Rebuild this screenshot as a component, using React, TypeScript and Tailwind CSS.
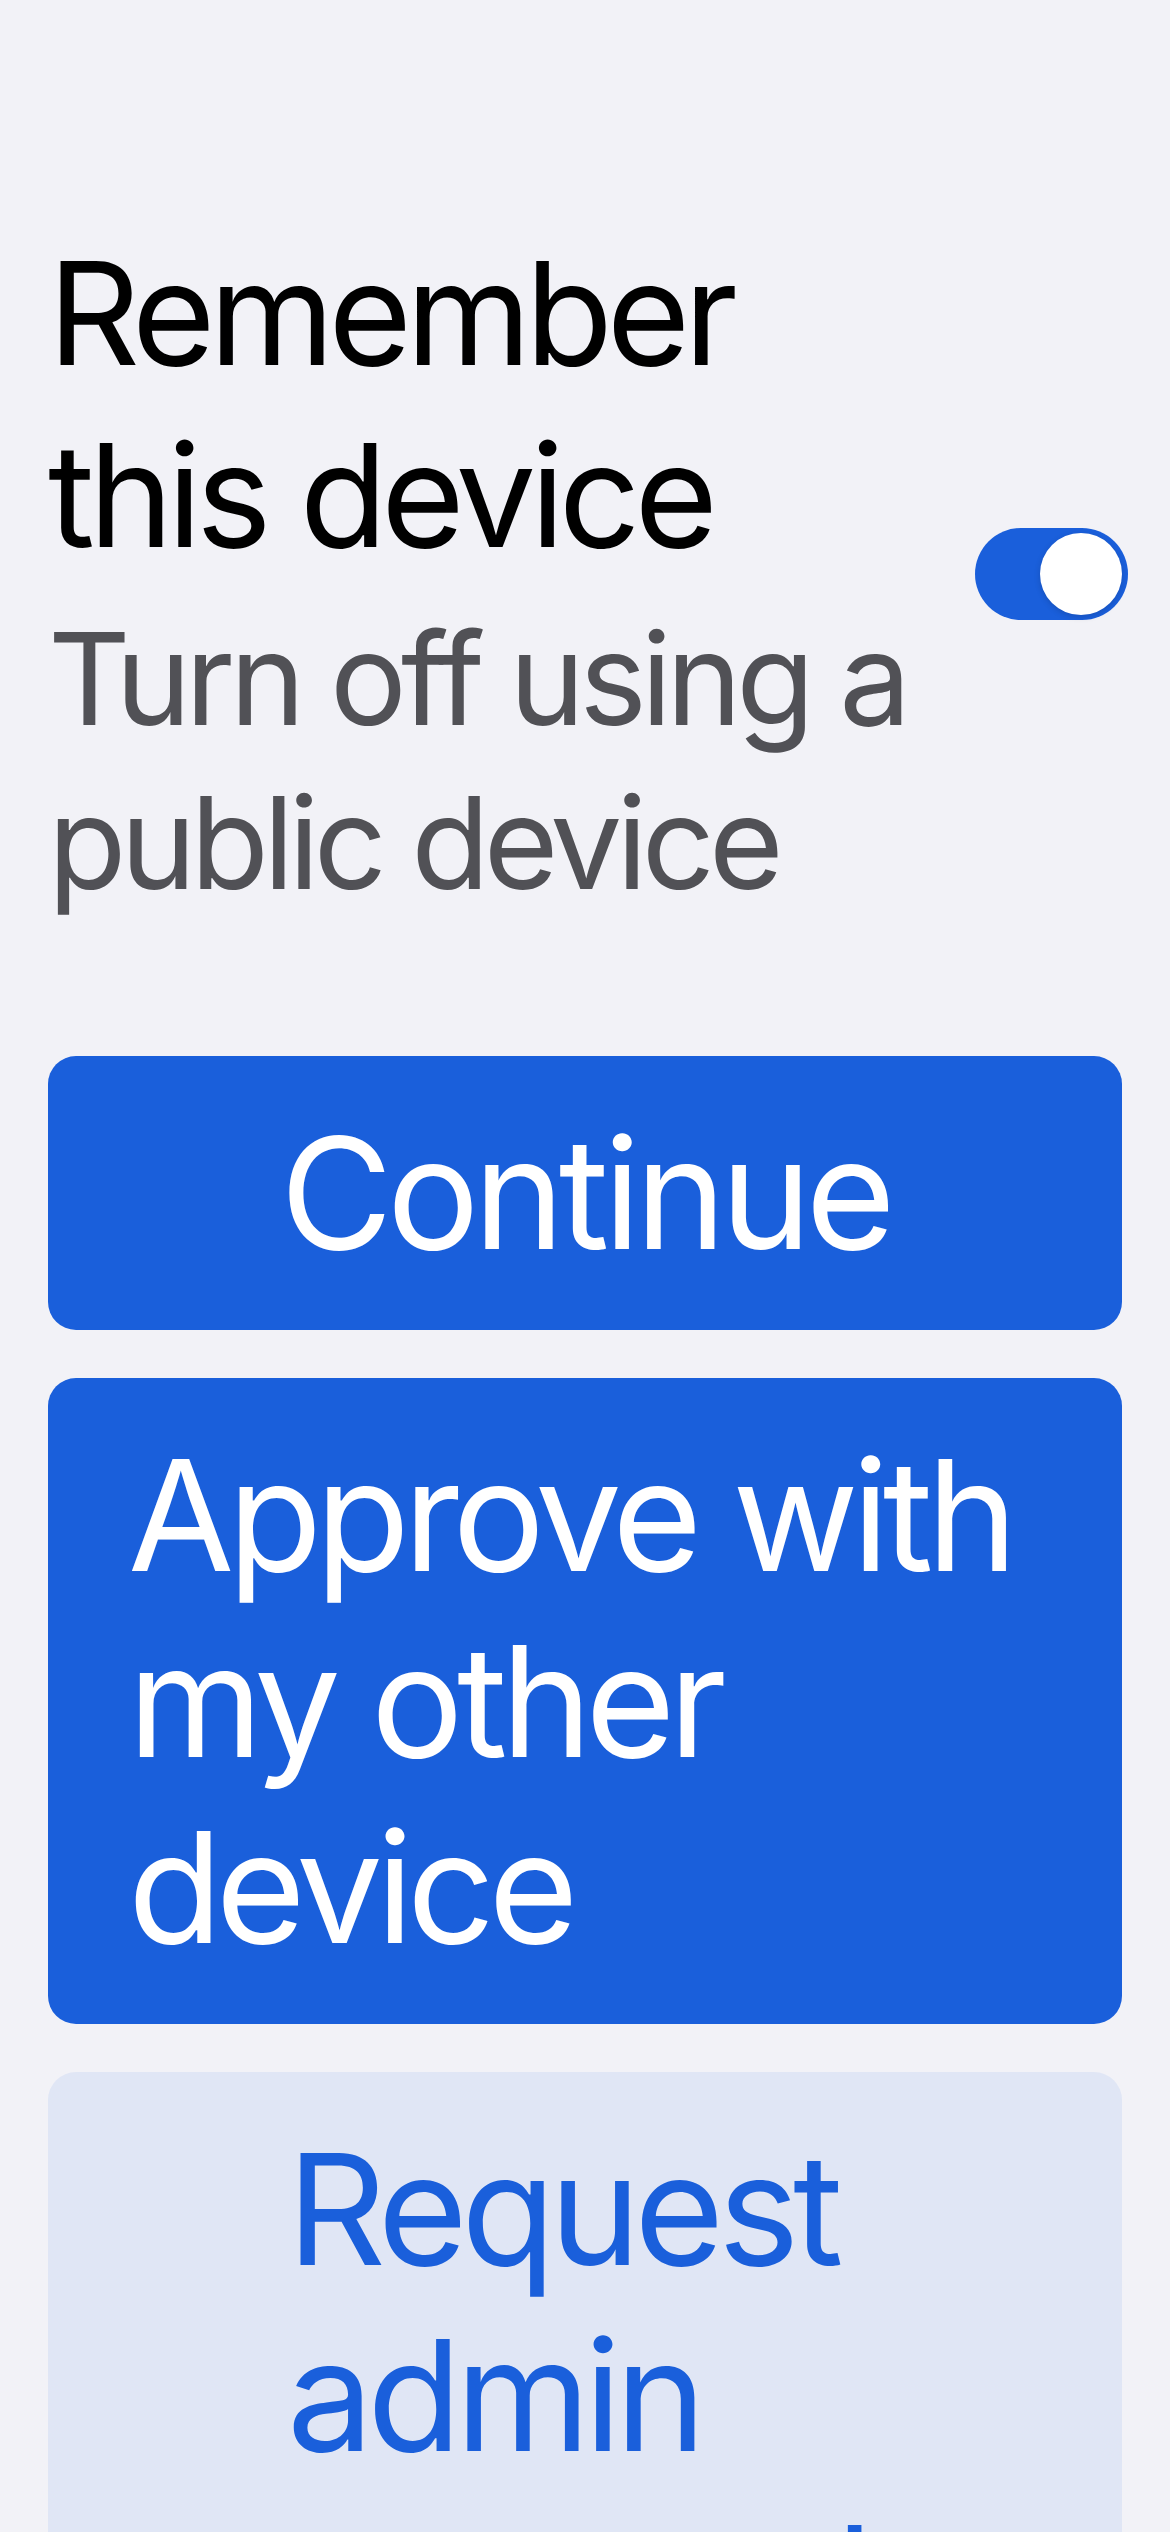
import React from "react";

const font = { fontFamily: 'Inter, "Noto Sans", sans-serif' };

function Toggle() {
  return (
    <div className="relative h-[92px] w-[153px] shrink-0 rounded-full bg-[#1a5fdb] -mr-[6px]">
      <div className="absolute right-[6px] top-[5px] h-[82px] w-[82px] rounded-full bg-white shadow-[0_2px_6px_rgba(0,0,0,0.15)]" />
    </div>
  );
}

export default function App() {
  return (
    <div className="min-h-screen w-full bg-[#f2f2f7] px-[48px] pt-[222px]" style={font}>
      <div className="flex items-center justify-between">
        <div className="flex flex-col">
          <h1 className="text-[143px] leading-[182px] font-normal tracking-[-0.042em] text-black">
            Remember
            <br />
            this device
          </h1>
          <p className="mt-[11px] text-[128px] leading-[164px] tracking-[-0.045em] text-[#515156]">
            Turn off using a
            <br />
            public device
          </p>
        </div>
        <Toggle />
      </div>

      <div className="mt-[131px] flex flex-col gap-[48px]">
        <button className="w-full rounded-[28px] bg-[#1a5fdb] py-[44px] text-center text-[154px] leading-[186px] tracking-[-0.037em] text-white">
          Continue
        </button>
        <button className="w-full rounded-[28px] bg-[#1a5fdb] py-[44px] pl-[80px] text-left text-[154px] leading-[186px] tracking-[-0.042em] text-white">
          Approve with
          <br />
          my other
          <br />
          device
        </button>
        <button className="w-full rounded-[28px] bg-[#e0e6f5] py-[44px] text-[154px] leading-[186px] tracking-[-0.04em] text-[#1a5fdb]">
          <span className="mx-auto block w-fit pr-[16px] text-left">
            Request
            <br />
            admin
            <br />
            approval
          </span>
        </button>
      </div>
    </div>
  );
}
